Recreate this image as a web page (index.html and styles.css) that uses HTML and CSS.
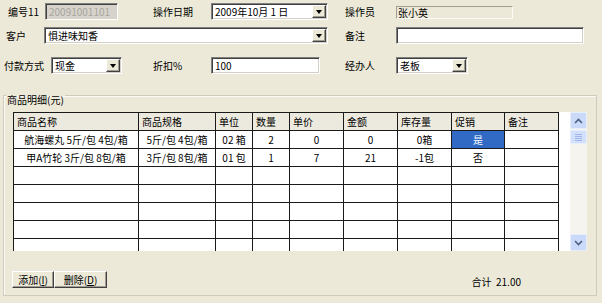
FILE: index.html
```html
<!DOCTYPE html>
<html lang="zh-CN">

<head>
    <meta charset="UTF-8">
    <title>销售单</title>
    <link rel="stylesheet" href="styles.css">
</head>

<body>
    <div class="form">
        <div class="row r1">
            <span class="lbl lbl-no">编号11</span>
            <div class="field disabled w-no">20091001101</div>
            <span class="lbl lbl-mid">操作日期</span>
            <div class="combo w-date"><span class="val">2009年10月 1 日</span><span class="drop"></span></div>
            <span class="lbl lbl-right">操作员</span>
            <div class="readonly w-op">张小英</div>
        </div>
        <div class="row r2">
            <span class="lbl lbl-cust">客户</span>
            <div class="combo w-cust"><span class="val">惧进味知香</span><span class="drop"></span></div>
            <span class="lbl lbl-right">备注</span>
            <div class="field w-note"></div>
        </div>
        <div class="row r3">
            <span class="lbl lbl-pay">付款方式</span>
            <div class="combo w-pay"><span class="val">现金</span><span class="drop"></span></div>
            <span class="lbl lbl-disc">折扣%</span>
            <div class="field w-disc">100</div>
            <span class="lbl lbl-agent">经办人</span>
            <div class="combo w-agent"><span class="val">老板</span><span class="drop"></span></div>
        </div>
    </div>

    <fieldset class="group">
        <legend>商品明细(元)</legend>
        <div class="grid">
            <table>
                <colgroup>
                    <col style="width:125px">
                    <col style="width:77px">
                    <col style="width:37px">
                    <col style="width:37px">
                    <col style="width:54px">
                    <col style="width:54px">
                    <col style="width:54px">
                    <col style="width:53px">
                    <col style="width:54px">
                </colgroup>
                <thead>
                    <tr>
                        <th>商品名称</th>
                        <th>商品规格</th>
                        <th>单位</th>
                        <th>数量</th>
                        <th>单价</th>
                        <th>金额</th>
                        <th>库存量</th>
                        <th>促销</th>
                        <th>备注</th>
                    </tr>
                </thead>
                <tbody>
                    <tr>
                        <td>航海螺丸 5斤/包 4包/箱</td>
                        <td>5斤/包 4包/箱</td>
                        <td>02 箱</td>
                        <td>2</td>
                        <td>0</td>
                        <td>0</td>
                        <td>0箱</td>
                        <td class="selected">是</td>
                        <td></td>
                    </tr>
                    <tr>
                        <td>甲A竹轮 3斤/包 8包/箱</td>
                        <td>3斤/包 8包/箱</td>
                        <td>01 包</td>
                        <td>1</td>
                        <td>7</td>
                        <td>21</td>
                        <td>-1包</td>
                        <td>否</td>
                        <td></td>
                    </tr>
                    <tr><td></td><td></td><td></td><td></td><td></td><td></td><td></td><td></td><td></td></tr>
                    <tr><td></td><td></td><td></td><td></td><td></td><td></td><td></td><td></td><td></td></tr>
                    <tr><td></td><td></td><td></td><td></td><td></td><td></td><td></td><td></td><td></td></tr>
                    <tr><td></td><td></td><td></td><td></td><td></td><td></td><td></td><td></td><td></td></tr>
                    <tr><td></td><td></td><td></td><td></td><td></td><td></td><td></td><td></td><td></td></tr>
                </tbody>
            </table>
            <div class="vscroll">
                <div class="sb-btn">
                    <svg width="9" height="6" viewBox="0 0 9 6"><path d="M1 5 L4.5 1.5 L8 5" fill="none" stroke="#4d6185" stroke-width="1.6"/></svg>
                </div>
                <div class="sb-thumb">
                    <span></span><span></span><span></span><span></span>
                </div>
                <div class="sb-track"></div>
                <div class="sb-btn">
                    <svg width="9" height="6" viewBox="0 0 9 6"><path d="M1 1 L4.5 4.5 L8 1" fill="none" stroke="#4d6185" stroke-width="1.6"/></svg>
                </div>
            </div>
        </div>

        <div class="actions">
            <button class="btn btn-add">添加(<u>I</u>)</button>
            <button class="btn btn-del">删除(<u>D</u>)</button>
            <span class="total">合计&nbsp;&nbsp;21.00</span>
        </div>
    </fieldset>
</body>

</html>
```

FILE: styles.css
```css
body,
html {
    margin: 0;
    padding: 0;
}

body {
    width: 602px;
    height: 303px;
    overflow: hidden;
    background: #ece9d8;
    font-family: "Noto Sans CJK SC", "Noto Sans", sans-serif;
    font-size: 10px;
    color: #000;
}

/* Top form */
.form {
    padding-top: 3px;
}

.row {
    display: flex;
    align-items: center;
    height: 17px;
}

.r2 {
    margin-top: 7px;
}

.r3 {
    margin-top: 13px;
}

.lbl {
    white-space: nowrap;
    line-height: 12px;
}

.lbl-no { margin-left: 8px; width: 37px; }
.lbl-mid { margin-left: 35px; width: 58px; }
.lbl-right { margin-left: 17px; width: 51px; }
.lbl-cust { margin-left: 6px; width: 38px; }
.lbl-pay { margin-left: 4px; width: 47px; }
.lbl-disc { margin-left: 31px; width: 58px; }
.lbl-agent { margin-left: 25px; width: 51px; }

.w-no { width: 73px; }
.w-date { width: 117px; }
.w-op { width: 117px; }
.w-cust { width: 284px; }
.w-note { width: 188px; }
.w-pay { width: 71px; }
.w-disc { width: 109px; }
.w-agent { width: 72px; }

/* Sunken edit box */
.field,
.combo {
    box-sizing: border-box;
    height: 17px;
    background: #fff;
    border-top: 1px solid #808080;
    border-left: 1px solid #808080;
    border-right: 1px solid #fff;
    border-bottom: 1px solid #fff;
    box-shadow: inset 1px 1px 0 #404040, inset -1px -1px 0 #d4d0c8;
    line-height: 15px;
    padding-left: 3px;
    white-space: nowrap;
}

.field.disabled {
    background: #d6d3cc;
    color: #a8a59c;
}

.combo {
    display: flex;
    padding: 1px 1px 1px 3px;
}

.combo .val {
    flex: 1;
    line-height: 13px;
}

.drop {
    position: relative;
    width: 14px;
    height: 13px;
    box-sizing: border-box;
    background: #ece9d8;
    border-top: 1px solid #fff;
    border-left: 1px solid #fff;
    border-right: 1px solid #404040;
    border-bottom: 1px solid #404040;
    box-shadow: inset -1px -1px 0 #a09d90;
}

.drop::after {
    content: "";
    position: absolute;
    left: 3px;
    top: 4px;
    border-left: 3.5px solid transparent;
    border-right: 3.5px solid transparent;
    border-top: 4px solid #000;
}

.readonly {
    box-sizing: border-box;
    width: 117px;
    height: 13px;
    margin-top: 2px;
    border-top: 1px solid #a09d92;
    border-left: 1px solid #a09d92;
    border-right: 1px solid #fbfaf6;
    border-bottom: 1px solid #fbfaf6;
    line-height: 11px;
    padding-left: 1px;
}

/* Group box */
.group {
    margin: 11px 5px 0 3px;
    padding: 6px 9px 7px;
    border: 1px solid #cfccbd;
    box-shadow: inset 1px 1px 0 #fbfaf6;
    min-width: 0;
}

.group legend {
    margin-left: -7px;
    padding: 8px 1px 0;
    line-height: 13px;
}

.grid {
    display: flex;
    height: 139px;
    overflow: hidden;
    background: #fff;
}

table {
    border-collapse: collapse;
    table-layout: fixed;
    width: 546px;
    flex: none;
    align-self: flex-start;
}

th,
td {
    border: 1px solid #1a1a1a;
    height: 18px;
    padding: 0 3px;
    box-sizing: border-box;
    white-space: nowrap;
    overflow: hidden;
    line-height: 14px;
}

th {
    background: #ece9de;
    font-weight: normal;
    text-align: left;
}

td {
    text-align: center;
}

td.selected {
    background: #316ac5;
    color: #fff;
}

/* Scroll bar */
.vscroll {
    margin-left: auto;
    width: 17px;
    display: flex;
    flex-direction: column;
    background: #f5f4ef;
}

.sb-btn {
    height: 17px;
    box-sizing: border-box;
    display: flex;
    align-items: center;
    justify-content: center;
    background: #cbdaf9;
    border: 1px solid #e6eefd;
    border-radius: 2px;
}

.sb-thumb {
    height: 14px;
    margin-top: 1px;
    box-sizing: border-box;
    display: flex;
    flex-direction: column;
    justify-content: center;
    gap: 1px;
    background: #d3e0fb;
    border: 1px solid #e6eefd;
    border-radius: 2px;
}

.sb-thumb span {
    display: block;
    height: 1px;
    margin: 0 4px;
    background: #9fb6e8;
}

.sb-track {
    flex: 1;
}

/* Bottom bar */
.actions {
    display: flex;
    align-items: center;
    margin-top: 20px;
    height: 17px;
}

.btn {
    height: 17px;
    box-sizing: border-box;
    padding: 0;
    margin: 0;
    font: inherit;
    line-height: 13px;
    background: #ece9d8;
    border-top: 1px solid #fff;
    border-left: 1px solid #fff;
    border-right: 1px solid #404040;
    border-bottom: 1px solid #404040;
    box-shadow: inset -1px -1px 0 #a09d90;
    color: #000;
}

.btn-add {
    margin-left: -1px;
    width: 42px;
}

.btn-del {
    width: 53px;
}

.total {
    margin-left: auto;
    margin-right: 66px;
    margin-top: 3px;
}
```
